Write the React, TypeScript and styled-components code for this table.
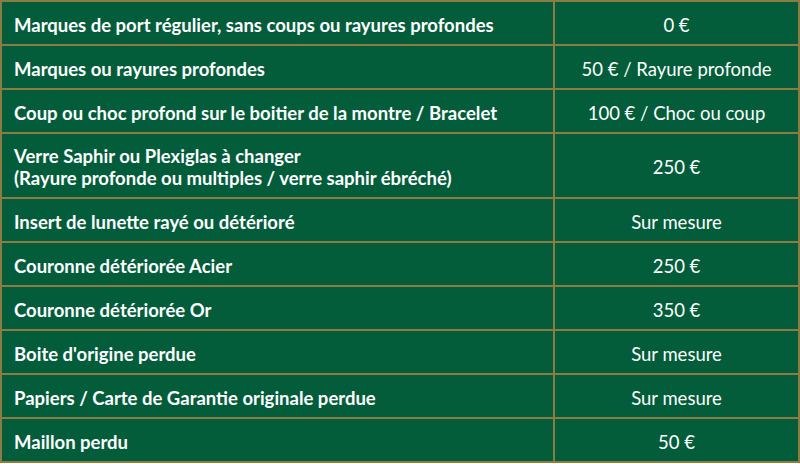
import React from "react";
import styled, { createGlobalStyle } from "styled-components";

const Global = createGlobalStyle`
  html, body { margin: 0; padding: 0; background: #ffffff; }
  body { font-family: Lato, "Open Sans", sans-serif; }
`;

const Table = styled.table`
  width: 800px;
  border-collapse: collapse;
  background: #035d3a;
  color: #ffffff;
  border: 2px solid #8d7c42;
  table-layout: fixed;
`;

const Row = styled.tr<{ $tall?: boolean }>`
  height: ${(p) => (p.$tall ? "65px" : "44px")};
`;

const Label = styled.td`
  width: 539px;
  border: 2px solid #8d7c42;
  padding: 3px 0 0 12px;
  font-weight: 700;
  font-size: 18.5px;
  line-height: 22px;
  text-align: left;
  vertical-align: middle;
  white-space: nowrap;
`;

const Price = styled.td`
  border: 2px solid #8d7c42;
  padding: 3px 0 0 0;
  font-weight: 400;
  font-size: 18.5px;
  line-height: 22px;
  text-align: center;
  vertical-align: middle;
  white-space: nowrap;
`;

const rows: { label: React.ReactNode; price: string; tall?: boolean }[] = [
  { label: "Marques de port régulier, sans coups ou rayures profondes", price: "0 €" },
  { label: "Marques ou rayures profondes", price: "50 € / Rayure profonde" },
  { label: "Coup ou choc profond sur le boitier de la montre / Bracelet", price: "100 € / Choc ou coup" },
  {
    label: (
      <>
        Verre Saphir ou Plexiglas à changer
        <br />
        (Rayure profonde ou multiples / verre saphir ébréché)
      </>
    ),
    price: "250 €",
    tall: true,
  },
  { label: "Insert de lunette rayé ou détérioré", price: "Sur mesure" },
  { label: "Couronne détériorée Acier", price: "250 €" },
  { label: "Couronne détériorée Or", price: "350 €" },
  { label: "Boite d'origine perdue", price: "Sur mesure" },
  { label: "Papiers / Carte de Garantie originale perdue", price: "Sur mesure" },
  { label: "Maillon perdu", price: "50 €" },
];

export default function App() {
  return (
    <>
      <Global />
      <Table>
        <tbody>
          {rows.map((r, i) => (
            <Row key={i} $tall={r.tall}>
              <Label>{r.label}</Label>
              <Price>{r.price}</Price>
            </Row>
          ))}
        </tbody>
      </Table>
    </>
  );
}
